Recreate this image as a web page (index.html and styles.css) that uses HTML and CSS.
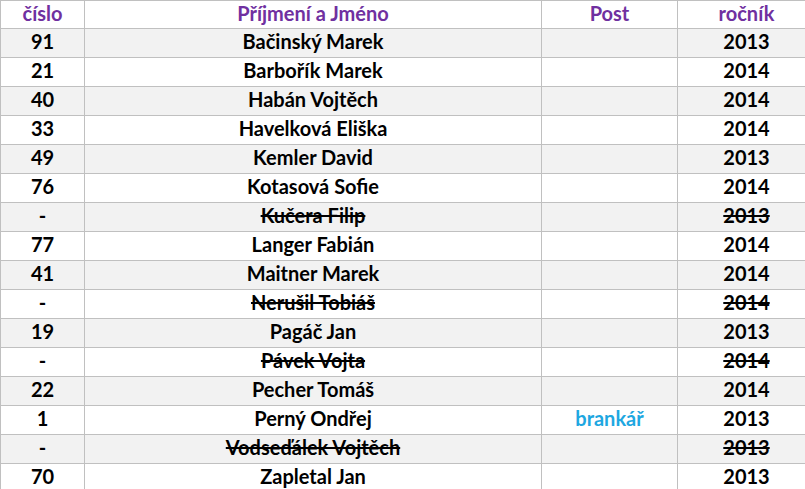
FILE: index.html
```html
<!DOCTYPE html>
<html lang="cs">
<head>
<meta charset="utf-8">
<title>Soupiska</title>
<link rel="stylesheet" href="styles.css">
</head>
<body>
<table class="roster">
  <colgroup>
    <col class="c-num"><col class="c-name"><col class="c-post"><col class="c-year">
  </colgroup>
  <thead>
    <tr><th>číslo</th><th>Příjmení a Jméno</th><th>Post</th><th>ročník</th></tr>
  </thead>
  <tbody>
    <tr class="alt"><td>91</td><td>Bačinský Marek</td><td></td><td>2013</td></tr>
    <tr><td>21</td><td>Barbořík Marek</td><td></td><td>2014</td></tr>
    <tr class="alt"><td>40</td><td>Habán Vojtěch</td><td></td><td>2014</td></tr>
    <tr><td>33</td><td>Havelková Eliška</td><td></td><td>2014</td></tr>
    <tr class="alt"><td>49</td><td>Kemler David</td><td></td><td>2013</td></tr>
    <tr><td>76</td><td>Kotasová Sofie</td><td></td><td>2014</td></tr>
    <tr class="alt gone"><td>-</td><td><s>Kučera Filip</s></td><td></td><td><s>2013</s></td></tr>
    <tr><td>77</td><td>Langer Fabián</td><td></td><td>2014</td></tr>
    <tr class="alt"><td>41</td><td>Maitner Marek</td><td></td><td>2014</td></tr>
    <tr class="gone"><td>-</td><td><s>Nerušil Tobiáš</s></td><td></td><td><s>2014</s></td></tr>
    <tr class="alt"><td>19</td><td>Pagáč Jan</td><td></td><td>2013</td></tr>
    <tr class="gone"><td>-</td><td><s>Pávek Vojta</s></td><td></td><td><s>2014</s></td></tr>
    <tr class="alt"><td>22</td><td>Pecher Tomáš</td><td></td><td>2014</td></tr>
    <tr><td>1</td><td>Perný Ondřej</td><td class="post">brankář</td><td>2013</td></tr>
    <tr class="alt gone"><td>-</td><td><s>Vodseďálek Vojtěch</s></td><td></td><td><s>2013</s></td></tr>
    <tr><td>70</td><td>Zapletal Jan</td><td></td><td>2013</td></tr>
  </tbody>
</table>
</body>
</html>
```

FILE: styles.css
```css
html, body {
  margin: 0;
  padding: 0;
  background: #ffffff;
  overflow: hidden;
}
.roster {
  border-collapse: collapse;
  table-layout: fixed;
  width: 815px;
  font-family: "Lato", "Open Sans", sans-serif;
  font-weight: 700;
  font-size: 20px;
  color: #000000;
}
.c-num { width: 84px; }
.c-name { width: 457px; }
.c-post { width: 136px; }
.c-year { width: 138px; }
.roster th,
.roster td {
  border: 1px solid #c0c0c0;
  height: 24px;
  padding: 0 0 4px 0;
  text-align: center;
  vertical-align: middle;
  line-height: 20px;
  white-space: nowrap;
}
.roster th {
  color: #7030a0;
  height: 23px;
}
.roster tr.alt td {
  background: #f2f2f2;
}
.roster s {
  text-decoration-thickness: 2px;
}
.roster td.post {
  color: #1ea7e1;
}
```
